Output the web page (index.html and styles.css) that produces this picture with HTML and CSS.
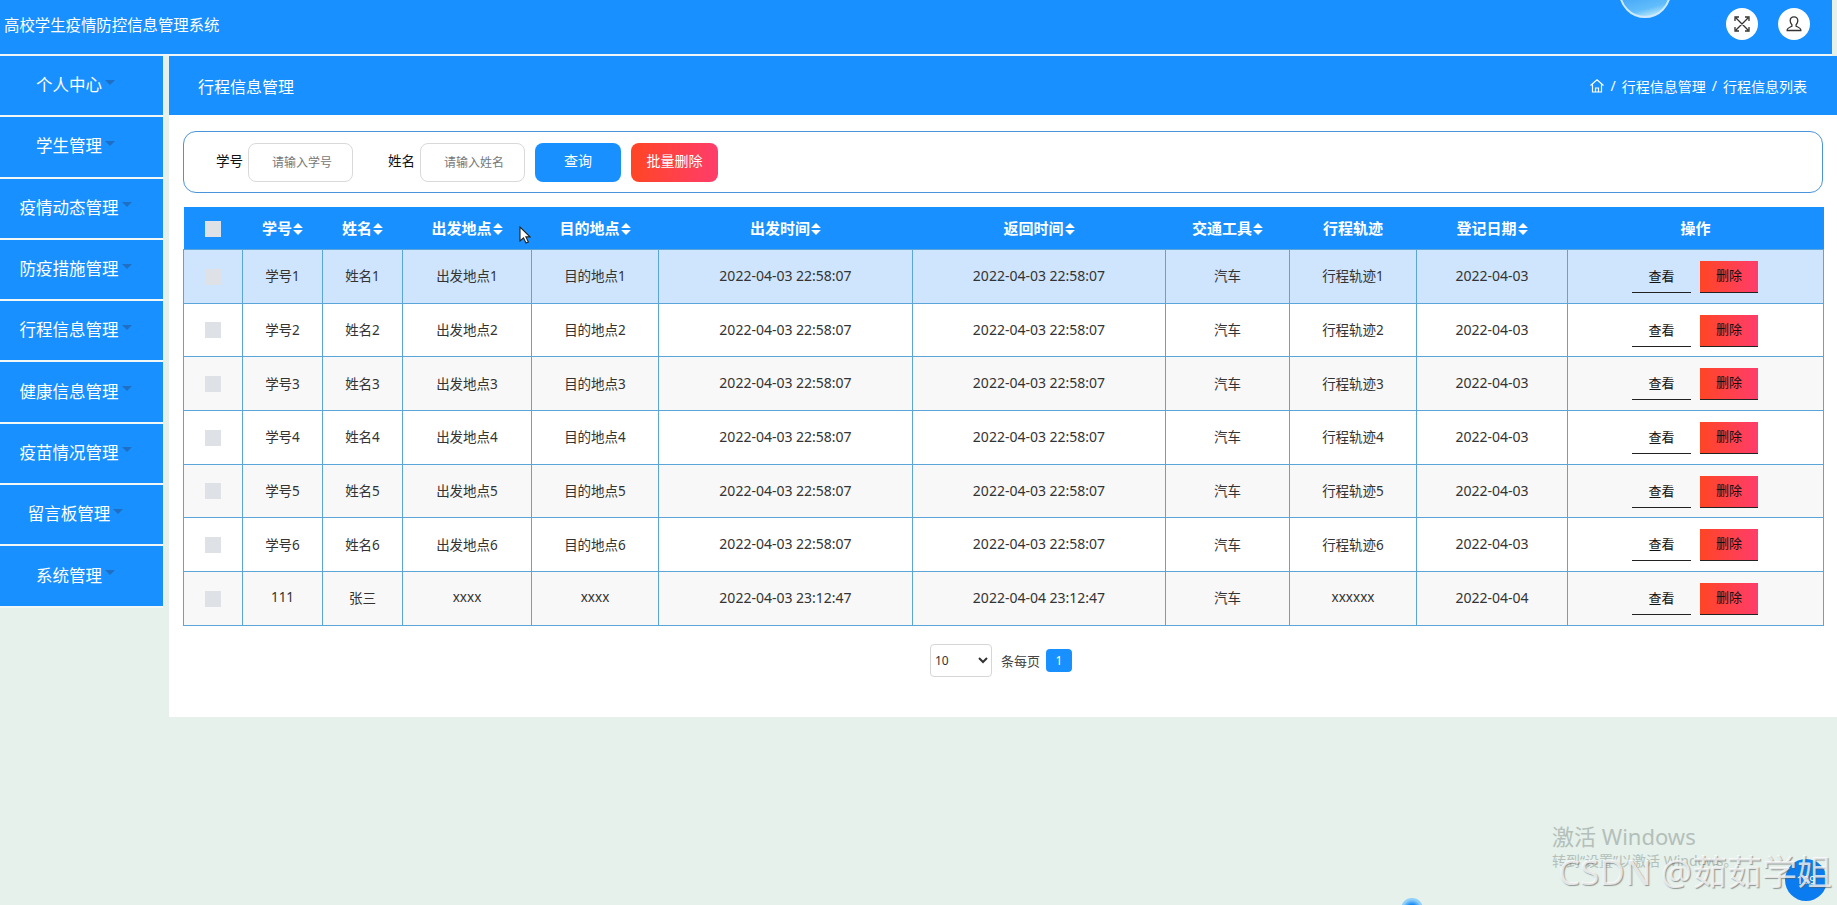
FILE: index.html
```html
<!DOCTYPE html>
<html lang="zh">
<head>
<meta charset="utf-8">
<title>高校学生疫情防控信息管理系统</title>
<link rel="stylesheet" href="styles.css">
</head>
<body>
<svg class="defs" width="0" height="0">
  <symbol id="sort" viewBox="0 0 9 11"><path d="M4.5 0 9 4.6H0ZM0 6.4h9L4.500 11Z" fill="#fff"/></symbol>
</svg>
<header class="top">
  <h1 class="brand">高校学生疫情防控信息管理系统</h1>
  <span class="orb"></span>
  <div class="top-icons">
    <span class="round">
      <svg viewBox="0 0 18 18" width="18" height="18" fill="none" stroke="#333" stroke-width="1.3"><path d="M3 3l12 12M15 3 3 15M2 6V2h4M12 2h4v4M16 12v4h-4M6 16H2v-4"/></svg>
    </span>
    <span class="round">
      <svg viewBox="0 0 18 18" width="18" height="18" fill="none" stroke="#333" stroke-width="1.3"><path d="M9 1.800c-2.400 0-3.800 1.800-3.800 4 0 1.700.8 3 1.700 3.900v1.500c-1.500.8-4.500 1.700-4.700 3.300v1h13.600v-1c-.2-1.600-3.200-2.500-4.700-3.300V9.700c.9-.9 1.700-2.200 1.700-3.900 0-2.200-1.400-4-3.800-4Z"/></svg>
    </span>
  </div>
</header>
<div class="layout">
  <nav class="side">
    <a class="side-item">个人中心<i class="caret"></i></a>
    <a class="side-item">学生管理<i class="caret"></i></a>
    <a class="side-item">疫情动态管理<i class="caret"></i></a>
    <a class="side-item">防疫措施管理<i class="caret"></i></a>
    <a class="side-item">行程信息管理<i class="caret"></i></a>
    <a class="side-item">健康信息管理<i class="caret"></i></a>
    <a class="side-item">疫苗情况管理<i class="caret"></i></a>
    <a class="side-item">留言板管理<i class="caret"></i></a>
    <a class="side-item">系统管理<i class="caret"></i></a>
  </nav>
  <main class="main">
    <div class="title-bar">
      <span class="title">行程信息管理</span>
      <span class="crumbs">
        <svg viewBox="0 0 16 16" width="16" height="16" fill="none" stroke="#fff" stroke-width="1.200"><path d="M1.500 7.500 8 1.800l6.500 5.700M3.500 6.500V14h9V6.500M6.500 14v-4h3v4"/></svg>
        <span>/</span><span>行程信息管理</span><span>/</span><span>行程信息列表</span>
      </span>
    </div>
    <div class="content">
      <form class="search">
        <label class="field field-first"><span class="lab">学号</span><input class="inp" placeholder="请输入学号"></label>
        <label class="field field-second"><span class="lab">姓名</span><input class="inp" placeholder="请输入姓名"></label>
        <button type="button" class="btn btn-blue">查询</button>
        <button type="button" class="btn btn-red">批量删除</button>
      </form>
      <table class="grid">
        <colgroup>
          <col class="c1"><col class="c2"><col class="c3"><col class="c4"><col class="c5"><col class="c6"><col class="c7"><col class="c8"><col class="c9"><col class="c10"><col class="c11">
        </colgroup>
        <thead>
          <tr>
            <th><span class="check"></span></th>
            <th>学号<svg class="sort"><use href="#sort"/></svg></th>
            <th>姓名<svg class="sort"><use href="#sort"/></svg></th>
            <th>出发地点<svg class="sort"><use href="#sort"/></svg></th>
            <th>目的地点<svg class="sort"><use href="#sort"/></svg></th>
            <th>出发时间<svg class="sort"><use href="#sort"/></svg></th>
            <th>返回时间<svg class="sort"><use href="#sort"/></svg></th>
            <th>交通工具<svg class="sort"><use href="#sort"/></svg></th>
            <th>行程轨迹</th>
            <th>登记日期<svg class="sort"><use href="#sort"/></svg></th>
            <th>操作</th>
          </tr>
        </thead>
        <tbody>
          <tr class="hover"><td><span class="check"></span></td><td>学号1</td><td>姓名1</td><td>出发地点1</td><td>目的地点1</td><td class="num">2022-04-03 22:58:07</td><td class="num">2022-04-03 22:58:07</td><td>汽车</td><td>行程轨迹1</td><td class="num">2022-04-03</td><td><span class="ops"><a class="op op-view">查看</a><a class="op op-del">删除</a></span></td></tr>
          <tr><td><span class="check"></span></td><td>学号2</td><td>姓名2</td><td>出发地点2</td><td>目的地点2</td><td class="num">2022-04-03 22:58:07</td><td class="num">2022-04-03 22:58:07</td><td>汽车</td><td>行程轨迹2</td><td class="num">2022-04-03</td><td><span class="ops"><a class="op op-view">查看</a><a class="op op-del">删除</a></span></td></tr>
          <tr class="alt"><td><span class="check"></span></td><td>学号3</td><td>姓名3</td><td>出发地点3</td><td>目的地点3</td><td class="num">2022-04-03 22:58:07</td><td class="num">2022-04-03 22:58:07</td><td>汽车</td><td>行程轨迹3</td><td class="num">2022-04-03</td><td><span class="ops"><a class="op op-view">查看</a><a class="op op-del">删除</a></span></td></tr>
          <tr><td><span class="check"></span></td><td>学号4</td><td>姓名4</td><td>出发地点4</td><td>目的地点4</td><td class="num">2022-04-03 22:58:07</td><td class="num">2022-04-03 22:58:07</td><td>汽车</td><td>行程轨迹4</td><td class="num">2022-04-03</td><td><span class="ops"><a class="op op-view">查看</a><a class="op op-del">删除</a></span></td></tr>
          <tr class="alt"><td><span class="check"></span></td><td>学号5</td><td>姓名5</td><td>出发地点5</td><td>目的地点5</td><td class="num">2022-04-03 22:58:07</td><td class="num">2022-04-03 22:58:07</td><td>汽车</td><td>行程轨迹5</td><td class="num">2022-04-03</td><td><span class="ops"><a class="op op-view">查看</a><a class="op op-del">删除</a></span></td></tr>
          <tr><td><span class="check"></span></td><td>学号6</td><td>姓名6</td><td>出发地点6</td><td>目的地点6</td><td class="num">2022-04-03 22:58:07</td><td class="num">2022-04-03 22:58:07</td><td>汽车</td><td>行程轨迹6</td><td class="num">2022-04-03</td><td><span class="ops"><a class="op op-view">查看</a><a class="op op-del">删除</a></span></td></tr>
          <tr class="alt"><td><span class="check"></span></td><td>111</td><td>张三</td><td>xxxx</td><td>xxxx</td><td class="num">2022-04-03 23:12:47</td><td class="num">2022-04-04 23:12:47</td><td>汽车</td><td>xxxxxx</td><td class="num">2022-04-04</td><td><span class="ops"><a class="op op-view">查看</a><a class="op op-del">删除</a></span></td></tr>
        </tbody>
      </table>
      <div class="pager">
        <select class="size"><option>10</option><option>20</option></select>
        <span class="per">条每页</span>
        <span class="page-on">1</span>
      </div>
    </div>
  </main>
</div>
<svg class="cursor" viewBox="0 0 12 18" width="12" height="18"><path d="M1 1v14l3.500-3.200L7 17l2.400-1.100-2.500-5H11Z" fill="#fff" stroke="#222" stroke-width="1.100"/></svg>
<span class="dot"></span>
<div class="activate">
  <div class="act-1">激活 Windows</div>
  <div class="act-2">转到“设置”以激活 Windows。</div>
</div>
<span class="fab">199</span>
<div class="mark">CSDN @茹茹学姐</div>
</body>
</html>
```
FILE: styles.css
```css
* { box-sizing: border-box; }
html, body { margin: 0; height: 905px; overflow: hidden; }
body {
  position: relative;
  background: #e5f1ea;
  font-family: "Noto Sans", "Noto Sans CJK SC", sans-serif;
  font-size: 14px;
  color: #333;
}
.defs { position: absolute; }

.top {
  position: relative;
  width: 1832px;
  height: 56px;
  background: #1890ff;
  border-bottom: 2px solid #eef7f5;
  display: flex;
  align-items: flex-start;
  overflow: hidden;
}
.brand {
  margin: 0;
  padding: 15px 0 0 4px;
  font-size: 15.400px;
  line-height: 22px;
  font-weight: 400;
  color: #fff;
}
.orb {
  position: absolute;
  left: 1619px;
  top: -34px;
  width: 52px;
  height: 52px;
  border-radius: 50%;
  border: 2px solid #cfeaff;
  background: linear-gradient(165deg, #3a9ff5 40%, #62bdfb 78%, #a9e0fb 90%);
}
.top-icons {
  margin-left: auto;
  margin-right: 22px;
  margin-top: 8px;
  display: flex;
  gap: 20px;
}
.round {
  width: 32px;
  height: 32px;
  border-radius: 50%;
  background: #fff;
  display: flex;
  align-items: center;
  justify-content: center;
}

.layout { display: flex; align-items: flex-start; gap: 6px; }
.side { width: 163px; flex: none; }
.side-item {
  height: 61.300px;
  background: #1890ff;
  border-bottom: 2px solid #f2f8f6;
  color: #fff;
  font-size: 16.500px;
  display: flex;
  align-items: center;
  justify-content: center;
  padding-bottom: 3px;
  padding-right: 12px;
}
.caret {
  width: 0;
  height: 0;
  margin-left: 3px;
  margin-bottom: 4px;
  border-left: 5px solid transparent;
  border-right: 5px solid transparent;
  border-top: 5.500px solid #1f6fc4;
}

.main { width: 1668px; height: 661px; background: #fff; }
.title-bar {
  height: 59px;
  background: #1890ff;
  display: flex;
  align-items: center;
  justify-content: space-between;
  padding: 0 30px 0 29px;
  color: #fff;
}
.title { font-size: 16px; }
.crumbs { display: flex; align-items: center; gap: 6px; font-size: 14px; }

.content { padding: 16px 14px 0 14px; }
.search {
  height: 62px;
  border: 1px solid #4a94dc;
  border-radius: 13px;
  display: flex;
  align-items: center;
}
.field {
  display: flex;
  align-items: center;
  gap: 5px;
  color: #111;
  font-size: 13.500px;
}
.lab { margin-bottom: 4px; }
.field-first { margin-left: 32px; }
.field-second { margin-left: 35px; }
.inp {
  width: 105px;
  height: 39px;
  border: 1px solid #d9d9d9;
  border-radius: 8px;
  padding: 0 0 0 23px;
  font-family: inherit;
  font-size: 12px;
  outline: none;
}
.inp::placeholder { color: #777; }
.btn {
  height: 39px;
  width: 86px;
  border: 0;
  border-radius: 8px;
  color: #fff;
  font-family: inherit;
  font-size: 14px;
  padding: 0 0 5px;
}
.btn-blue { background: #1890ff; margin-left: 10px; }
.btn-red { background: linear-gradient(90deg, #ff4525, #ff3d6b); margin-left: 10px; width: 87px; }

.grid {
  width: 1640px;
  margin-top: 14px;
  border-collapse: collapse;
  table-layout: fixed;
}
.c1 { width: 59px; } .c2 { width: 80px; } .c3 { width: 80px; } .c4 { width: 129px; }
.c5 { width: 127px; } .c6 { width: 254px; } .c7 { width: 253px; } .c8 { width: 124px; }
.c9 { width: 127px; } .c10 { width: 151px; } .c11 { width: 256px; }
.grid th {
  height: 42.500px;
  background: #1890ff;
  color: #fff;
  font-size: 15px;
  font-weight: 700;
  text-align: center;
  padding: 0 0 2px;
  border: 0;
}
.grid td {
  height: 53.700px;
  text-align: center;
  padding: 0 0 2px;
  font-size: 13.500px;
  border: 1px solid #5ca5d8;
  color: #333;
}
.grid .num { font-size: 14px; }
.hover td { background: #cfe5fd; }
.alt td { background: #f8f8f8; }
.sort { width: 10px; height: 12px; margin-left: 1px; vertical-align: -1px; }
.check {
  display: inline-block;
  width: 16px;
  height: 16px;
  background: #dee1e5;
  vertical-align: middle;
}
.ops { display: flex; justify-content: flex-end; padding-right: 65px; gap: 9px; margin-top: 3px; }
.op {
  height: 32px;
  font-size: 13px;
  color: #111;
  border-bottom: 1px solid #222;
}
.op-view { width: 59px; line-height: 30px; }
.op-del { width: 58px; line-height: 29px; background: linear-gradient(90deg, #ff4525, #ff3d6b); }

.pager {
  display: flex;
  align-items: center;
  margin-top: 18px;
  padding-left: 747px;
  font-size: 13px;
  color: #444;
}
.size {
  width: 62px;
  height: 33px;
  border: 1px solid #d6d6d6;
  border-radius: 4px;
  background: #fff;
  font-family: inherit;
  font-size: 12px;
  color: #333;
}
.per { margin-left: 9px; }
.page-on {
  margin-left: 6px;
  width: 26px;
  height: 23px;
  line-height: 23px;
  border-radius: 4px;
  background: #1890ff;
  color: #fff;
  font-size: 12px;
  text-align: center;
}

.cursor { position: absolute; left: 519px; top: 226px; }
.dot {
  position: absolute;
  left: 1401px;
  top: 898px;
  width: 22px;
  height: 22px;
  border-radius: 50%;
  background: radial-gradient(circle, #1a8cf5 30%, #8fd0fb 60%);
}
.activate { position: absolute; left: 1552px; top: 821px; color: #b4bfba; }
.act-1 { font-size: 22px; line-height: 30px; }
.act-2 { font-size: 14px; line-height: 20px; }
.fab {
  position: absolute;
  left: 1785px;
  top: 859px;
  width: 42px;
  height: 42px;
  border-radius: 50%;
  background: #0a7cf0;
  color: #fff;
  font-size: 11px;
  text-align: center;
  line-height: 42px;
}
.mark {
  position: absolute;
  left: 1558px;
  top: 849px;
  font-size: 35px;
  line-height: 46px;
  white-space: nowrap;
  color: rgba(255, 255, 255, .75);
  text-shadow: 1px 1px 1px rgba(90, 90, 90, .6);
}
```
